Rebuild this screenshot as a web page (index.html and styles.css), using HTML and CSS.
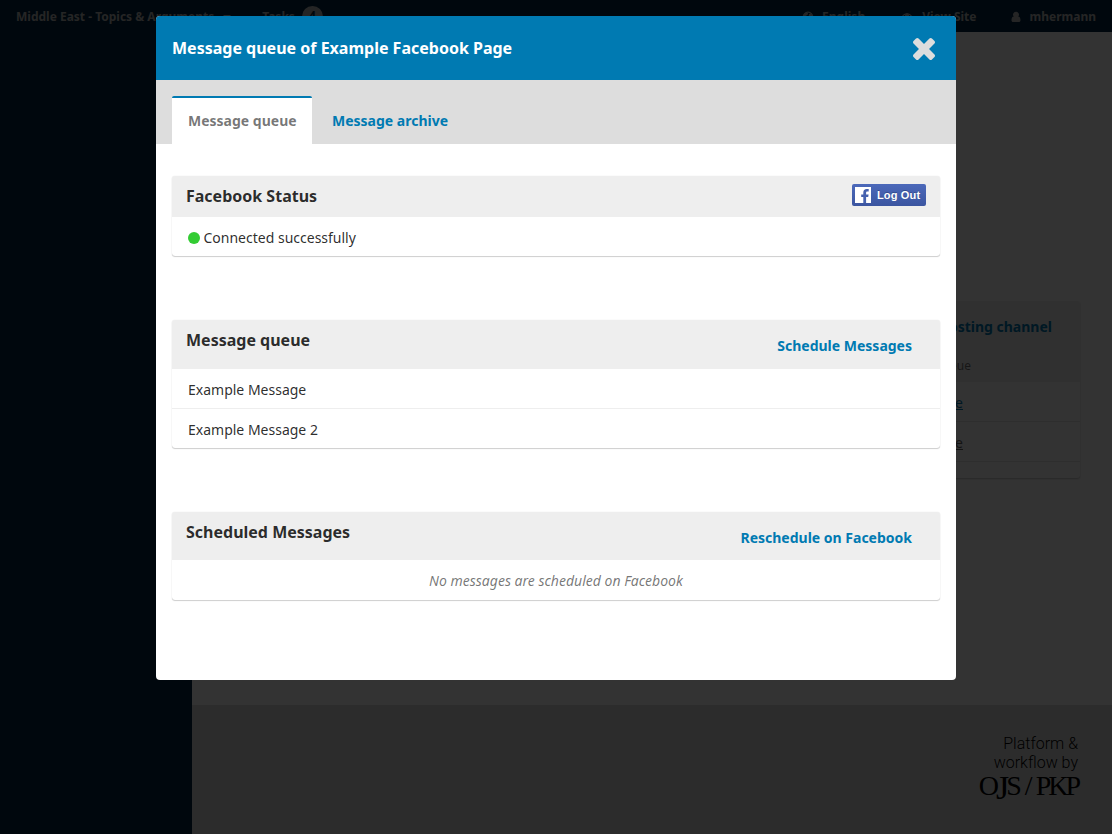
FILE: index.html
```html
<!DOCTYPE html>
<html lang="en">
<head>
<meta charset="utf-8">
<title>Message queue</title>
<link rel="stylesheet" href="styles.css">
</head>
<body>
<div class="app">
  <header class="topbar">
    <span class="journal">Middle East - Topics &amp; Arguments</span>
    <span class="caret"></span>
    <span class="tasks">Tasks</span>
    <span class="count">4</span>
    <nav class="usernav">
      <span class="navitem lang"><svg class="navicon" viewBox="0 0 12 12"><circle cx="6" cy="6" r="4.800" fill="none" stroke="currentColor" stroke-width="1.200"/><path d="M1.500 4l2.500-2.500 2 .5-.5 2-2 1 1 2-1.500 1zM7 3l2-.5 2 3-1 2.500-2-1-1.500 0z" fill="currentColor"/></svg>English</span>
      <span class="navitem site"><svg class="navicon" viewBox="0 0 12 12"><path d="M.6 6Q6-.8 11.400 6Q6 12.800.6 6z" fill="none" stroke="currentColor" stroke-width="1.200"/><circle cx="6" cy="5.500" r="2.400" fill="currentColor"/></svg>View Site</span>
      <span class="navitem user"><svg class="navicon" viewBox="0 0 12 12"><path d="M6 .8a2.800 2.800 0 0 1 2.100 4.800C9.800 5.700 10.500 7 10.500 9.200c0 1.200-.7 1.800-1.700 1.800H3.200c-1 0-1.700-.6-1.700-1.800C1.500 7 2.200 5.700 3.900 5.600A2.800 2.800 0 0 1 6 .8z" fill="currentColor"/></svg>mhermann</span>
    </nav>
  </header>
  <div class="page">
    <aside class="sidebar"></aside>
    <main class="main">
      <div class="content">
        <section class="channels">
          <div class="channels-head"><a class="channels-add">Add posting channel</a><div class="channels-cols">Message queue</div></div>
          <div class="channels-row"><a class="queue-link">Message queue</a></div>
          <div class="channels-row"><a class="queue-link visited">Message queue</a></div>
          <div class="channels-foot"></div>
        </section>
      </div>
      <footer class="footer">
        <div class="brand"><div class="brand-line">Platform &amp;</div><div class="brand-line">workflow by</div><div class="brand-name">O<span class="brand-j">J</span>S / PKP</div></div>
      </footer>
    </main>
  </div>
</div>
<div class="overlay">
  <div class="modal">
    <header class="modal-head">
      <h1 class="modal-title">Message queue of Example Facebook Page</h1>
      <svg class="close" viewBox="110 366 1188 1188"><path fill="#ddd" d="M1298 1322q0 40-28 68l-136 136q-28 28-68 28t-68-28l-294-294-294 294q-28 28-68 28t-68-28l-136-136q-28-28-28-68t28-68l294-294-294-294q-28-28-28-68t28-68l136-136q28-28 68-28t68 28l294 294 294-294q28-28 68-28t68 28l136 136q28 28 28 68t-28 68l-294 294 294 294q28 28 28 68z"/></svg>
    </header>
    <nav class="tabs"><a class="tab active">Message queue</a><a class="tab">Message archive</a></nav>
    <div class="panels">
      <section class="card status">
        <div class="card-head"><h2 class="card-title">Facebook Status</h2>
          <button class="fb"><svg class="fb-logo" viewBox="0 0 16 16"><path d="M0 0h16v16H0z" fill="#fff"/><path d="M8.300 16v-6H6.200V7.500h2.100V5.700C8.300 3.300 9.600 2 11.800 2h1.900v2.400h-1.200c-1 0-1.400.4-1.400 1.300v1.800h2.500L13.200 10h-2.100v6z" fill="#4561ae"/></svg><span>Log Out</span></button>
        </div>
        <div class="row"><span class="dot"></span>Connected successfully</div>
      </section>
      <section class="card queue">
        <div class="card-head"><h2 class="card-title">Message queue</h2><a class="action">Schedule Messages</a></div>
        <div class="row">Example Message</div>
        <div class="row">Example Message 2</div>
      </section>
      <section class="card scheduled">
        <div class="card-head"><h2 class="card-title">Scheduled Messages</h2><a class="action">Reschedule on Facebook</a></div>
        <div class="row empty">No messages are scheduled on Facebook</div>
      </section>
    </div>
  </div>
</div>
</body>
</html>
```
FILE: styles.css
```css
* { box-sizing: border-box; }
body { margin: 0; height: 834px; overflow: hidden; background: #fff; color: rgba(0, 0, 0, .84); font: 14px/20px "Noto Sans", sans-serif; }
h1, h2 { margin: 0; font-size: 16px; line-height: 24px; font-weight: 700; }
.app { height: 834px; display: flex; flex-direction: column; }
.topbar { height: 32px; flex: none; display: flex; align-items: center; padding: 2px 16px 0; background: #002640; color: #bbb; font-size: 12px; font-weight: 700; }
.caret { margin-left: 9px; border: 4px solid transparent; border-top-color: currentColor; border-bottom: 0; }
.tasks { margin-left: 31px; }
.count { margin: -2px 0 0 7px; width: 21px; height: 21px; border-radius: 50%; background: #bbb; color: #002640; text-align: center; }
.usernav { margin-left: auto; display: flex; }
.navitem { display: flex; align-items: center; }
.navicon { width: 12px; height: 12px; margin-right: 8px; }
.site { margin-left: 36px; }
.site .navicon { margin-right: 9px; }
.user { margin-left: 34px; }
.user .navicon { margin-right: 7px; }
.page { flex: 1; display: flex; }
.sidebar { width: 192px; background: #002640; }
.main { flex: 1; display: flex; flex-direction: column; }
.content { flex: 1; padding: 269px 31px 0 32px; }
.channels { margin-right: 1px; border-radius: 3px; box-shadow: 0 1px 2px rgba(0, 0, 0, .25); text-align: right; }
.channels-head { height: 81px; padding: 16px 28px 0; background: #eee; border-radius: 3px 3px 0 0; }
.channels-add { color: #007ab2; font-weight: 700; }
.channels-cols { margin: 20px 81px 0 0; font-size: 12px; line-height: 18px; color: rgba(0, 0, 0, .54); }
.channels-row { height: 40px; padding: 11px 117px 0 0; border-bottom: 1px solid #e4e4e4; }
.queue-link { color: #007ab2; text-decoration: underline; }
.queue-link.visited { color: #666; }
.channels-foot { height: 16px; }
.footer { height: 129px; padding: 29px 32px 0; background: #ddd; display: flex; justify-content: flex-end; }
.brand { color: #000; text-align: right; font: 300 16px/19px Roboto, sans-serif; }
.brand-line { padding-right: 2px; }
.brand-name { height: 34px; margin-right: 2px; font: 28px/28px "Liberation Serif", serif; letter-spacing: -3px; word-spacing: 2px; white-space: nowrap; }
.brand-j { font-size: 34px; line-height: 0; vertical-align: -4px; }
.overlay { position: fixed; inset: 0; padding-top: 16px; background: rgba(0, 0, 0, .8); }
.modal { width: 800px; height: 664px; margin: 0 auto; background: #fff; border-radius: 4px; overflow: hidden; }
.modal-head { height: 64px; padding: 0 21px 0 16px; background: #007ab2; color: #fff; display: flex; align-items: center; justify-content: space-between; }
.close { width: 22px; height: 22px; margin-top: 2px; }
.tabs { height: 64px; padding: 16px 16px 0; background: #ddd; display: flex; gap: 4px; }
.tab { height: 48px; padding: 13px 16px 0; color: #007ab2; font-weight: 700; border-top: 2px solid transparent; }
.tab.active { width: 140px; white-space: nowrap; background: #fff; color: rgba(0, 0, 0, .54); border-top-color: #007ab2; border-radius: 2px 2px 0 0; }
.panels { padding: 32px 16px 0; display: flex; flex-direction: column; gap: 64px; }
.card { border-radius: 3px; box-shadow: 0 1px 1px rgba(0, 0, 0, .18), 0 0 1px rgba(0, 0, 0, .18); }
.card-head { height: 49px; padding: 8px 28px 0 14px; background: #eee; border-radius: 3px 3px 0 0; display: flex; justify-content: space-between; align-items: flex-start; }
.action { margin-top: 8px; color: #007ab2; font-weight: 700; }
.row { height: 40px; padding: 11px 16px 0; }
.queue .row:nth-child(2) { height: 39px; }
.row + .row { border-top: 1px solid #eee; }
.scheduled .card-head { height: 48px; }
.status .card-head { height: 41px; padding-right: 14px; }
.status .row { height: 39px; display: flex; align-items: center; padding-top: 3px; }
.dot { width: 12px; height: 12px; margin-right: 3.500px; border-radius: 50%; background: #3c3; }
.empty { text-align: center; color: rgba(0, 0, 0, .54); font-style: italic; }
.fb { width: 74px; height: 22px; padding: 0 3px; border: 0; border-radius: 2px; background: linear-gradient(#4c69ba, #3b55a0); color: #fff; display: flex; align-items: center; font: 700 11px/20px "Liberation Sans", sans-serif; letter-spacing: .15px; white-space: nowrap; text-shadow: 0 -1px 0 #354c8c; }
.fb-logo { width: 16px; height: 16px; flex: none; margin-right: 6px; }
```
